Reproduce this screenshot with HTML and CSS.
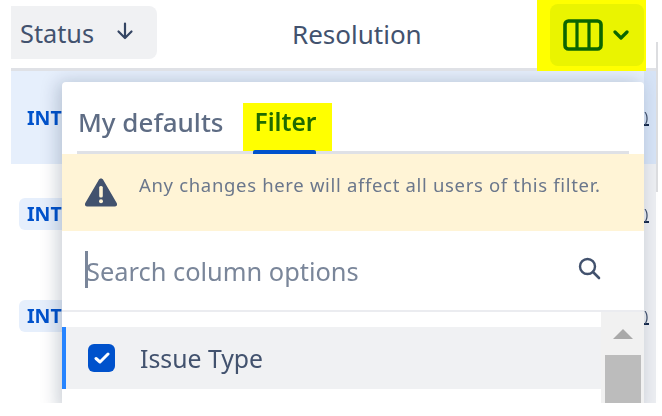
FILE: index.html
```html
<!DOCTYPE html>
<html lang="en">
<head>
<meta charset="utf-8">
<title>Column picker</title>
<link rel="stylesheet" href="styles.css">
</head>
<body>
<div class="screen">
  <div class="table">
    <header class="head">
      <div class="sort-btn">
        <span>Status</span>
        <svg class="arrow" viewBox="0 0 18 18" width="18" height="18"><path d="M9 1.500V15.500M2.500 9.500L9 16L15.500 9.500" fill="none" stroke="#344563" stroke-width="2.200" stroke-linecap="round" stroke-linejoin="round"/></svg>
      </div>
      <div class="res">Resolution</div>
      <div class="hl-col">
        <div class="col-btn">
          <svg viewBox="0 0 40 32" width="40" height="32"><rect x="2" y="2" width="36" height="28" rx="3.500" fill="none" stroke="#0b6500" stroke-width="3.600"/><path d="M14 3V29M26 3V29" stroke="#0b6500" stroke-width="3.200"/></svg>
          <svg viewBox="0 0 16 10" width="16" height="10"><path d="M2 2L8 8L14 2" fill="none" stroke="#0b6500" stroke-width="3.200" stroke-linecap="round" stroke-linejoin="round"/></svg>
        </div>
      </div>
    </header>
    <div class="row row-a"><span class="badge">INT</span><span class="end"><span class="mark">)</span></span></div>
    <div class="row row-b"><span class="badge tinted">INT</span><span class="end"><span class="mark">)</span></span></div>
    <div class="row row-c"><span class="badge tinted">INT</span><span class="end"><span class="mark">)</span></span></div>
    <div class="row row-d"><span class="end"></span></div>
  </div>
  <div class="page-scroll"></div>

  <section class="popup">
    <nav class="tabs">
      <span class="tab">My defaults</span>
      <span class="tab-filter">Filter</span>
    </nav>
    <div class="warn">
      <svg class="warn-icon" viewBox="0 0 34 30" width="34" height="30"><path d="M17 1.500C16 1.500 15.200 2 14.700 3L1.300 26C.3 27.800 1.300 29.500 3.300 29.500H30.700C32.700 29.500 33.700 27.800 32.700 26L19.300 3C18.800 2 18 1.500 17 1.500Z" fill="#42526e"/><rect x="15.200" y="9" width="3.600" height="11.500" rx="1.500" fill="#fff4d6"/><circle cx="17" cy="24.300" r="2" fill="#fff4d6"/></svg>
      <span>Any changes here will affect all users of this filter.</span>
    </div>
    <div class="search">
      <span class="caret"></span>
      <span class="placeholder">Search column options</span>
      <svg class="search-icon" viewBox="0 0 24 24" width="24" height="24"><circle cx="10.500" cy="10.500" r="7.500" fill="none" stroke="#42526e" stroke-width="2.400"/><path d="M16 16L22 22" stroke="#42526e" stroke-width="2.600" stroke-linecap="round"/></svg>
    </div>
    <div class="list">
      <div class="options">
        <div class="option">
          <span class="check"><svg viewBox="0 0 16 14" width="16" height="14"><path d="M2 7.500L6 11L14 3" fill="none" stroke="#fff" stroke-width="3" stroke-linecap="round" stroke-linejoin="round"/></svg></span>
          <span>Issue Type</span>
        </div>
      </div>
      <div class="scrollbar">
        <span class="up"></span>
        <span class="thumb"></span>
      </div>
    </div>
  </section>
</div>
</body>
</html>
```
FILE: styles.css
```css
* { box-sizing: border-box; }
html, body { margin: 0; height: 100%; background: #fff; }
body { font-family: "Noto Sans", "Open Sans", sans-serif; overflow: hidden; }

.screen {
  position: relative;
  height: 403px;
  overflow: hidden;
  filter: blur(0.45px);
}

.table { margin-left: 11px; width: 645px; }

.head {
  position: relative;
  z-index: 2;
  height: 71px;
  display: flex;
  align-items: flex-start;
  background: #fff;
  border-bottom: 3px solid #dfe1e6;
  color: #42526e;
  font-size: 26px;
}
.sort-btn {
  margin-top: 6px;
  width: 146px;
  height: 53px;
  padding-left: 9px;
  display: flex;
  align-items: center;
  gap: 22px;
  background: #f0f1f3;
  border-radius: 0 8px 8px 0;
  font-size: 25.300px;
}
.arrow { margin-top: -4px; }
.res { margin-left: 135px; line-height: 68px; }
.hl-col {
  position: absolute;
  left: 526px;
  top: 0;
  width: 109px;
  height: 71px;
  padding: 4px 2px 0 13px;
  background: #ffff00;
}
.col-btn {
  height: 62px;
  display: flex;
  align-items: center;
  gap: 10px;
  padding-left: 13px;
  background: #eaf400;
  border-radius: 8px;
}

.row { display: flex; align-items: center; justify-content: space-between; }
.row-a { height: 93px; background: #e6effc; padding-left: 16px; }
.row-b { height: 100px; padding-left: 8px; }
.row-c { height: 104px; padding-left: 8px; }
.row-d { height: 40px; justify-content: flex-end; }
.row, .end { align-self: stretch; }
.badge {
  width: 60px;
  height: 32px;
  line-height: 32px;
  font-size: 19.500px;
  font-weight: 700;
  color: #0052cc;
  border-radius: 6px;
}
.tinted { background: #e6effc; padding-left: 8px; }
.end {
  width: 12px;
  display: flex;
  align-items: center;
  background: #eceef2;
  color: #42526e;
  font-size: 14px;
}
.row-a .end { background: #d6e3f6; }
.mark { border-bottom: 2px solid #172b4d; line-height: 15px; padding-right: 1px; }

.page-scroll {
  position: absolute;
  left: 656px;
  top: 42px;
  width: 2px;
  height: 150px;
  background: #dcdde0;
}

.popup {
  position: absolute;
  z-index: 1;
  left: 62px;
  top: 82px;
  width: 582px;
  height: 330px;
  background: #fff;
  border-radius: 4px 4px 0 0;
  box-shadow: -4px 0 18px rgba(9, 30, 66, .22);
}
.tabs {
  height: 72px;
  margin: 0 15px;
  display: flex;
  align-items: flex-start;
  border-bottom: 3px solid #dfe1e6;
  font-size: 26px;
  color: #5e6c84;
}
.tab { margin: 20px 0 0 1px; line-height: 40px; font-weight: 500; }
.tab-filter {
  position: relative;
  margin: 21px 0 0 20px;
  padding: 0 16px 0 11px;
  height: 51px;
  line-height: 38px;
  font-size: 24.500px;
  font-weight: 600;
  color: #1f6b00;
  background: linear-gradient(#ffff00 48px, transparent 48px);
}
.tab-filter::after {
  content: "";
  position: absolute;
  left: 10px;
  right: 16px;
  bottom: 0;
  height: 4px;
  border-radius: 2px 2px 0 0;
  background: #0052cc;
}
.warn {
  height: 77px;
  display: flex;
  align-items: flex-start;
  gap: 21px;
  padding: 18px 0 0 22px;
  background: #fff4d6;
  color: #6b778c;
  font-size: 18.500px;
  letter-spacing: .67px;
}
.warn-icon { margin-top: 5px; flex: none; }
.search {
  height: 81px;
  position: relative;
  display: flex;
  align-items: center;
  justify-content: space-between;
  padding: 0 43px 0 24px;
  border-bottom: 2px solid #ebecf0;
  color: #7a869a;
  font-size: 25.400px;
}
.caret {
  position: absolute;
  left: 23px;
  top: 20px;
  width: 3px;
  height: 37px;
  background: #7a869a;
}
.search-icon { margin-top: -6px; }
.list { display: flex; height: 91px; }
.options { flex: 1; padding-top: 15px; }
.option {
  height: 62px;
  display: flex;
  align-items: center;
  gap: 25px;
  padding-left: 22px;
  background: #f0f1f3;
  border-left: 4px solid #2684ff;
  color: #42526e;
  font-size: 24.800px;
}
.check {
  width: 27px;
  height: 28px;
  display: flex;
  align-items: center;
  justify-content: center;
  background: #0052cc;
  border-radius: 6px;
}
.scrollbar {
  width: 43px;
  background: #f1f1f1;
  display: flex;
  flex-direction: column;
  align-items: center;
  padding-top: 17px;
  padding-left: 1px;
}
.up {
  width: 0;
  height: 0;
  border-left: 10px solid transparent;
  border-right: 10px solid transparent;
  border-bottom: 10px solid #a9a9a9;
}
.thumb { margin-top: 16px; width: 36px; height: 60px; background: #bcbcbc; }
```
